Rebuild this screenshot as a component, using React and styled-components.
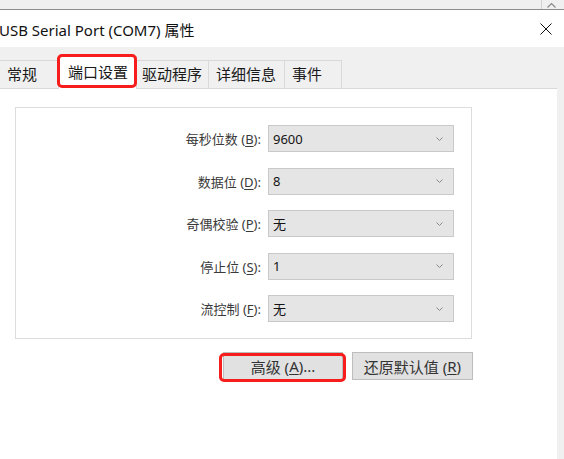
import React from "react";
import styled, { createGlobalStyle } from "styled-components";

const GlobalStyle = createGlobalStyle`
  html, body { margin: 0; padding: 0; background: #f0f0f0; }
  body {
    font-family: "Noto Sans", "Noto Sans CJK SC", sans-serif;
    color: #1a1a1a;
  }
  * { box-sizing: border-box; }
`;

const Window = styled.div`
  width: 564px;
  height: 459px;
  overflow: hidden;
  display: flex;
  flex-direction: column;
  background: #f0f0f0;
`;

const TopStrip = styled.div`
  height: 10px;
  flex: none;
  background: #f0f0f0;
  border-bottom: 1px solid #8c8c8c;
  display: flex;
  justify-content: flex-end;
`;

const ScrollStub = styled.div`
  width: 23px;
  height: 9px;
  border-left: 1px solid #d2d2d2;
  display: flex;
  align-items: flex-end;
  padding-left: 5px;
  padding-bottom: 1px;
`;

const TitleBar = styled.div`
  height: 37px;
  flex: none;
  background: #ffffff;
  display: flex;
  align-items: center;
  justify-content: space-between;
  padding-right: 12px;
`;

const Title = styled.div`
  font-size: 15px;
  margin-left: -1px;
  margin-top: 2px;
  color: #111;
  white-space: nowrap;
`;

const TabStrip = styled.div`
  height: 41px;
  flex: none;
  display: flex;
  align-items: flex-end;
  background: #f0f0f0;
`;

const Tab = styled.div`
  width: ${(p) => p.$w}px;
  height: 28px;
  flex: none;
  border-top: 1px solid #d9d9d9;
  border-right: 1px solid #d9d9d9;
  background: #f0f0f0;
  padding-left: 7px;
  font-size: 15px;
  line-height: 26px;
  color: #1a1a1a;
  white-space: nowrap;
`;

const ActiveTab = styled.div`
  position: relative;
  z-index: 2;
  width: ${(p) => p.$w}px;
  height: 33px;
  flex: none;
  margin: 0 -2px -1px -2px;
  border: 1px solid #d9d9d9;
  border-bottom: none;
  background: #ffffff;
  padding-left: 9px;
  font-size: 15px;
  line-height: 30px;
  color: #1a1a1a;
  white-space: nowrap;
`;

const Highlight = styled.span`
  position: absolute;
  left: ${(p) => p.$l}px;
  right: ${(p) => p.$r}px;
  top: ${(p) => p.$t}px;
  bottom: ${(p) => p.$b}px;
  border: 3px solid #f81d1d;
  border-radius: 5px;
  pointer-events: none;
`;

const Panel = styled.div`
  flex: 1;
  width: 557px;
  background: #ffffff;
  border-top: 1px solid #d9d9d9;
  padding: 18px 0 0 15px;
`;

const GroupBox = styled.div`
  width: 457px;
  height: 232px;
  border: 1px solid #dcdcdc;
  padding: 17px 17px 0 0;
  display: flex;
  flex-direction: column;
  align-items: flex-end;
  gap: 15.5px;
`;

const Row = styled.div`
  display: flex;
  align-items: center;
  gap: 7px;
`;

const Label = styled.span`
  font-size: 13px;
  color: #3a3a3a;
  white-space: nowrap;
`;

const Mn = styled.span`
  text-decoration: underline;
  text-underline-offset: 2px;
`;

const Combo = styled.div`
  width: 186px;
  height: 27px;
  background: #e5e5e5;
  border: 1px solid #c9c9c9;
  display: flex;
  align-items: center;
  justify-content: space-between;
  padding: 0 10px 0 4px;
  font-size: 13px;
  color: #141414;
`;

const ButtonRow = styled.div`
  width: 458px;
  margin-top: 13px;
  display: flex;
  justify-content: flex-end;
  gap: 9px;
`;

const Button = styled.div`
  position: relative;
  width: ${(p) => p.$w}px;
  height: 28px;
  background: #e1e1e1;
  border: 1px solid #bdbdbd;
  display: flex;
  align-items: center;
  justify-content: center;
  font-size: 15px;
  color: #333;
  white-space: nowrap;
`;

const Chevron = () => (
  <svg width="7" height="4" viewBox="0 0 7 4" fill="none">
    <polyline points="0.5,0.5 3.5,3.5 6.5,0.5" stroke="#8a8a8a" strokeWidth="1" />
  </svg>
);

const UpArrow = () => (
  <svg width="9" height="6" viewBox="0 0 9 6" fill="none">
    <polyline points="0.5,5.5 4.5,1.5 8.5,5.5" stroke="#8a8a8a" strokeWidth="1.2" />
  </svg>
);

const CloseIcon = () => (
  <svg width="12" height="12" viewBox="0 0 12 12" fill="none">
    <line x1="0.5" y1="0.5" x2="11.5" y2="11.5" stroke="#111" strokeWidth="1" />
    <line x1="11.5" y1="0.5" x2="0.5" y2="11.5" stroke="#111" strokeWidth="1" />
  </svg>
);

const fields = [
  { name: "每秒位数", key: "B", value: "9600" },
  { name: "数据位", key: "D", value: "8" },
  { name: "奇偶校验", key: "P", value: "无" },
  { name: "停止位", key: "S", value: "1" },
  { name: "流控制", key: "F", value: "无" },
];

export default function App() {
  return (
    <>
      <GlobalStyle />
      <Window>
        <TopStrip>
          <ScrollStub>
            <UpArrow />
          </ScrollStub>
        </TopStrip>
        <TitleBar>
          <Title>USB Serial Port (COM7) 属性</Title>
          <CloseIcon />
        </TitleBar>
        <TabStrip>
          <Tab $w={60}>常规</Tab>
          <ActiveTab $w={79}>
            端口设置
            <Highlight $l={-2} $r={-1} $t={-3} $b={1} />
          </ActiveTab>
          <Tab $w={74}>驱动程序</Tab>
          <Tab $w={76}>详细信息</Tab>
          <Tab $w={57}>事件</Tab>
        </TabStrip>
        <Panel>
          <GroupBox>
            {fields.map((f) => (
              <Row key={f.key}>
                <Label>
                  {f.name} (<Mn>{f.key}</Mn>):
                </Label>
                <Combo>
                  <span>{f.value}</span>
                  <Chevron />
                </Combo>
              </Row>
            ))}
          </GroupBox>
          <ButtonRow>
            <Button $w={120}>
              高级 (<Mn>A</Mn>)...
              <Highlight $l={-5} $r={-4} $t={0} $b={-3} />
            </Button>
            <Button $w={121}>
              还原默认值 (<Mn>R</Mn>)
            </Button>
          </ButtonRow>
        </Panel>
      </Window>
    </>
  );
}
